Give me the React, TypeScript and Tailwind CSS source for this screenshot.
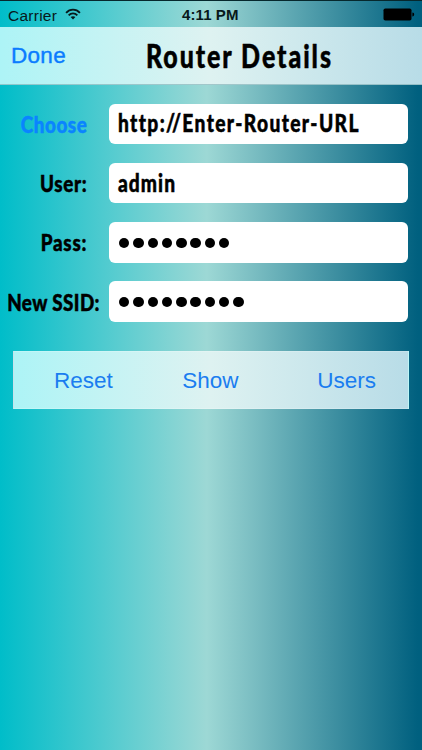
import { useState } from 'react';

const HAND =
  "font-['Lato','Liberation_Sans',sans-serif] font-black whitespace-nowrap [-webkit-text-stroke:0.5px_currentColor]";

const PANEL = 'bg-[linear-gradient(90deg,#adf4f6_0%,#def2f1_50%,#b8dce7_100%)]';

interface FieldProps {
  label: string;
  labelClass: string;
  value: string;
  valueClass?: string;
  secret?: boolean;
}

function Field({ label, labelClass, value, valueClass = '', secret = false }: FieldProps) {
  return (
    <div className="flex h-[40.5px] items-center">
      <div className="flex w-[93px] shrink-0 justify-end">
        <span className={`${HAND} origin-right scale-x-[0.8] text-[23.5px] ${labelClass}`}>{label}</span>
      </div>
      <div className="ml-auto flex h-full w-[299.5px] items-center overflow-hidden rounded-[6px] bg-white pl-[9px]">
        {secret ? (
          <div className="flex gap-[3.85px] pt-[1px] pl-[1.5px]">
            {value.split('').map((_, i) => (
              <span key={i} className="size-[10.45px] rounded-full bg-black" />
            ))}
          </div>
        ) : (
          <span className={`${HAND} origin-left scale-x-[0.8] text-[24px] text-black ${valueClass}`}>{value}</span>
        )}
      </div>
    </div>
  );
}

function StatusBar() {
  return (
    <div className="relative flex h-[27px] items-center justify-between border-t border-[#06282d] px-2 pt-[3px] text-[15.5px] text-[#08191b]">
      <div className="flex items-center gap-[8px]">
        <span className="tracking-[0.25px]">Carrier</span>
        <svg width="16" height="12" viewBox="0 0 17 13" fill="none" stroke="currentColor" strokeWidth="2" className="mt-[-4px]">
          <path d="M1 5.2C5.2 .7 11.8 .7 16 5.2" />
          <path d="M3.8 8C6.5 5.2 10.5 5.2 13.2 8" />
          <path d="M8.5 12.4 5.9 9.8C7.4 8.5 9.6 8.5 11.1 9.8Z" fill="currentColor" stroke="none" />
        </svg>
      </div>
      <span className="absolute left-[182px] text-[15px] font-bold tracking-[0.1px]">4:11 PM</span>
      <svg width="32" height="13" viewBox="0 0 32 13" className="mt-[-2px] mr-[-1px]">
        <rect x=".5" y=".5" width="28" height="12" rx="1.8" fill="#000" />
        <path d="M29.4 4.6C31.8 4.6 31.8 8.4 29.4 8.4Z" fill="#000" />
      </svg>
    </div>
  );
}

export default function App() {
  const [ssid] = useState('router123');

  return (
    <div className="h-[750px] w-[422px] overflow-hidden bg-[linear-gradient(90deg,#00bdc9_0%,#9dd8d5_49%,#00607f_99%)] font-['Liberation_Sans',Arial,sans-serif]">
      <StatusBar />
      <header className={`relative flex h-[58px] items-center border-b border-[#79aab0]/60 pt-[1px] pl-[11px] ${PANEL}`}>
        <button className="text-[22.5px] tracking-[0.3px] text-[#0a7cff] [-webkit-text-stroke:0.4px_currentColor]">Done</button>
        <h1 className={`${HAND} absolute left-[146px] origin-left scale-x-[0.78] text-[32px] tracking-[2.5px] text-black`}>
          Router Details
        </h1>
      </header>

      <main className="flex flex-col gap-[18.8px] pt-[18.5px] pr-[14px] pl-[7px]">
        <Field
          label="Choose"
          labelClass="pt-[2px] pr-[16px] tracking-[0.7px] text-[#0a84ff]"
          value="http://Enter-Router-URL"
          valueClass="pb-[2px] tracking-[1.7px]"
        />
        <Field
          label="User:"
          labelClass="pt-[2px] pr-[16px] tracking-[0.8px] text-black"
          value="admin"
          valueClass="tracking-[1.3px]"
        />
        <Field label="Pass:" labelClass="pr-[16px] tracking-[0.9px] text-black" value="password" secret />
        <Field label="New SSID:" labelClass="pt-[2px] tracking-[0.5px] text-black" value={ssid} secret />
      </main>

      <div className={`mt-[29px] ml-[13px] flex h-[58px] w-[395.5px] items-center border border-white/20 pt-[1px] text-[22.5px] text-[#1a7df0] ${PANEL}`}>
        <button className="ml-[40px]">Reset</button>
        <button className="ml-[69.5px]">Show</button>
        <button className="mr-[31.5px] ml-auto">Users</button>
      </div>
    </div>
  );
}
